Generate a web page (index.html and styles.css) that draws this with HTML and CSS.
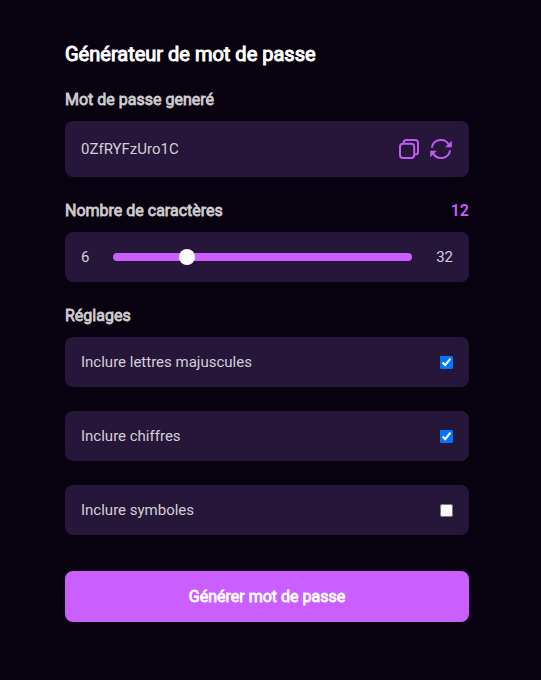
FILE: index.html
```html
<!DOCTYPE html>
<html lang="fr">
<head>
<meta charset="utf-8">
<title>Générateur de mot de passe</title>
<link rel="stylesheet" href="styles.css">
</head>
<body>
<main class="generator">
  <h1>Générateur de mot de passe</h1>
  <h2>Mot de passe generé</h2>
  <div class="card password">
    <span>0ZfRYFzUro1C</span>
    <div class="actions">
      <svg viewBox="0 0 24 24" class="icon"><path d="M6.600 7V5.500A2.500 2.500 0 0 1 9.100 3H18.200A2.800 2.800 0 0 1 21 5.800V15A2.600 2.600 0 0 1 18.400 17.600H17"/><rect x="3" y="6.800" width="14.200" height="14.200" rx="3"/></svg>
      <svg viewBox="0 0 24 24" class="icon"><path d="M2.900 10.600A9.100 9.100 0 0 1 20 8M21.100 13.400A9.100 9.100 0 0 1 4 16"/><path class="tip" d="M22.500 4.200V10H16.700ZM1.500 19.800V14H7.300Z"/></svg>
    </div>
  </div>
  <div class="heading-row"><h2>Nombre de caractères</h2><span class="count">12</span></div>
  <div class="card slider">
    <span>6</span>
    <input class="range" type="range" min="6" max="32" value="12">
    <span>32</span>
  </div>
  <h2>Réglages</h2>
  <div class="settings">
    <label class="card">Inclure lettres majuscules<input type="checkbox" checked></label>
    <label class="card">Inclure chiffres<input type="checkbox" checked></label>
    <label class="card">Inclure symboles<input type="checkbox"></label>
  </div>
  <button class="generate">Générer mot de passe</button>
</main>
</body>
</html>
```
FILE: styles.css
```css
* { box-sizing: border-box; }
body { margin: 0; min-height: 680px; background: #08010f; color: #d3d0d6; font: 15px/18px Roboto, sans-serif; }
.generator { width: 404px; margin: 0 auto 0 65px; padding-top: 42px; }
h1, h2, .generate { font-weight: 400; -webkit-text-stroke: 0.8px currentColor; }
h1 { margin: 0; color: #fff; font-size: 20px; line-height: 24px; -webkit-text-stroke-width: 1px; }
h2 { margin: 24px 0 12px; color: #cfccce; font-size: 16px; line-height: 19px; }
.card { display: flex; align-items: center; justify-content: space-between; height: 50px; padding: 0 16px; border-radius: 8px; background: #25163a; }
.password { height: 56px; }
.actions { display: flex; gap: 8px; }
.icon { width: 24px; height: 24px; fill: none; stroke: #c05cf2; stroke-width: 2; stroke-linejoin: round; }
.tip { fill: #c05cf2; stroke-width: 0.6; }
.heading-row { display: flex; justify-content: space-between; margin: 24px 0 12px; line-height: 19px; }
.heading-row h2 { margin: 0; }
.count { color: #cb5eff; font-size: 16px; font-weight: 600; }
.range { appearance: none; width: 299px; height: 8px; margin: 0; border-radius: 4px; background: #cb5eff; }
.range::-webkit-slider-thumb { appearance: none; width: 16px; height: 16px; border-radius: 50%; background: #fff; }
.settings { display: grid; gap: 24px; }
.settings input { width: 13px; height: 13px; margin: 0; }
.generate { display: block; width: 100%; height: 51px; margin-top: 36px; border: 0; border-radius: 8px; background: #cb5eff; color: #fff; font-family: Roboto, sans-serif; font-size: 16px; line-height: 19px; }
```
